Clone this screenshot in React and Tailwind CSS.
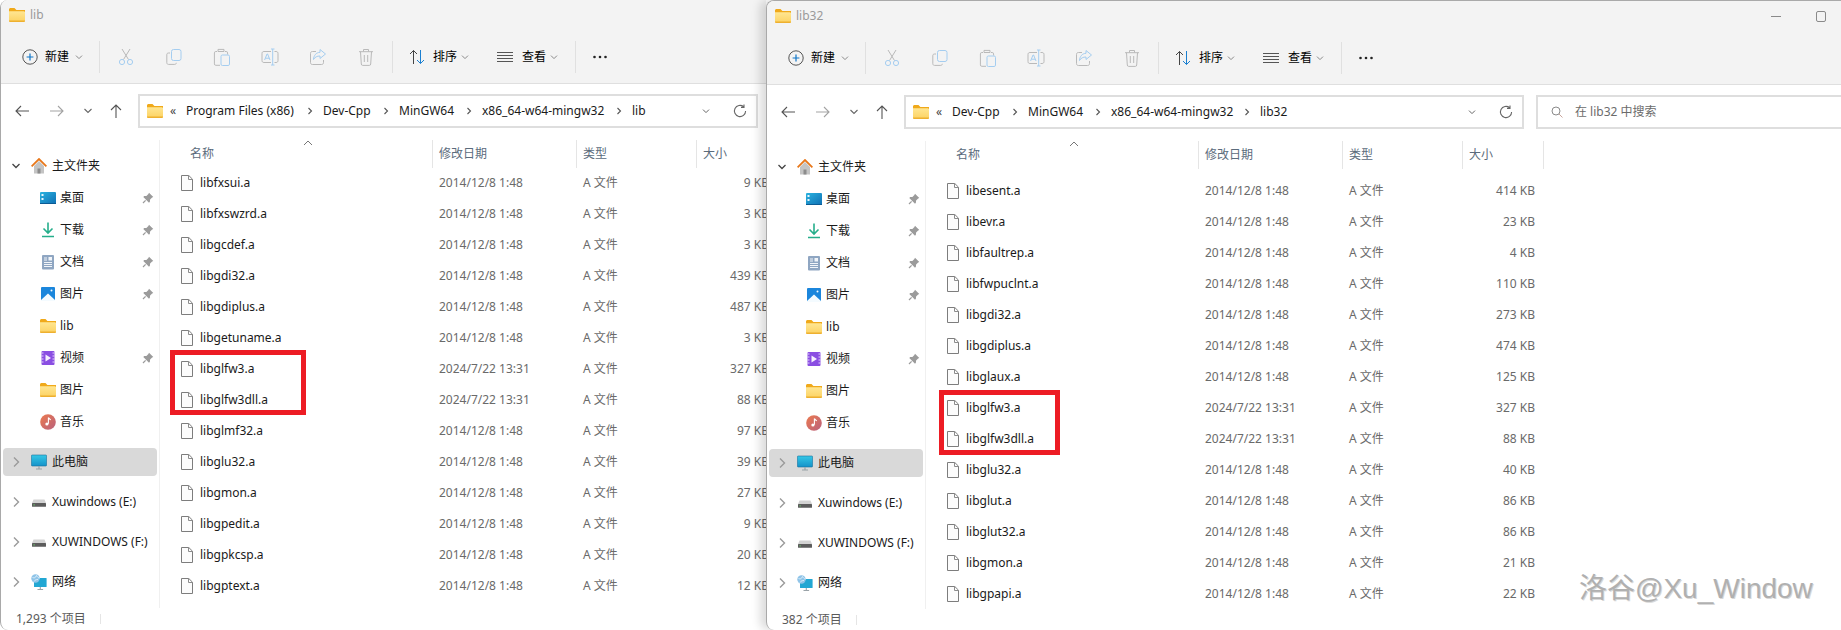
import React from "react";

const Folder = ({ className = "w-4 h-[14px]" }) => (
  <svg viewBox="0 0 16 14" className={className}>
    <defs>
      <linearGradient id="fg" x1="0" y1="0" x2="0" y2="1">
        <stop offset="0" stopColor="#ffe692" />
        <stop offset="1" stopColor="#fcd262" />
      </linearGradient>
    </defs>
    <path d="M0 1.5C0 .7.7 0 1.5 0h4L7.4 2H16v2H0z" fill="#f0a91a" />
    <path d="M0 3.2h14.6c.8 0 1.4.6 1.4 1.4v8c0 .8-.6 1.4-1.4 1.4H1.4C.6 14 0 13.4 0 12.6z" fill="url(#fg)" />
    <path d="M0 12.5h16v.2c0 .7-.6 1.3-1.3 1.3H1.3C.6 14 0 13.4 0 12.7z" fill="#eeb02f" />
  </svg>
);

const FileIcon = () => (
  <svg viewBox="0 0 12 16" className="w-3 h-4 shrink-0">
    <path d="M.5.5h7.3l3.7 3.7v11.3H.5z" fill="#fcfcfc" stroke="#7d7d7d" />
    <path d="M7.5.5v4h4" fill="none" stroke="#8c8c8c" />
  </svg>
);

const Chev = ({ c = "#8a8a8a" }) => (
  <svg viewBox="0 0 8 8" className="w-2 h-2 shrink-0">
    <path d="M1 2.6l3 3 3-3" fill="none" stroke={c} strokeWidth="1" />
  </svg>
);

const Cmd = ({ children }) => (
  <div className="w-[48px] h-[18px] flex items-center justify-center">
    <svg viewBox="0 0 18 18" className="w-[18px] h-[18px]" fill="none" strokeWidth="1">
      {children}
    </svg>
  </div>
);

const G = "#b9b9b9";
const B = "#a4cdf0";

const Divider = ({ className }) => <div className={className} />;

const CommandBar = () => (
  <div className="h-[53px] flex items-center pl-[21px] border-b border-[#dfdfdf] box-content">
    <svg viewBox="0 0 16 16" className="w-4 h-4 shrink-0">
      <circle cx="8" cy="8" r="7.2" fill="none" stroke="#555" strokeWidth="1" />
      <path d="M8 4.6v6.8M4.6 8h6.8" stroke="#0f76c8" strokeWidth="1.2" />
    </svg>
    <span className="ml-[7px] w-6 whitespace-nowrap">新建</span>
    <div className="ml-[6px]"><Chev /></div>
    <Divider className="ml-4 w-px h-8 bg-[#e0e0e0]" />
    <div className="ml-[2px] flex">
      <Cmd>
        <path d="M5 1l6.5 10.5M13 1L6.5 11.5" stroke={G} />
        <circle cx="5" cy="14" r="2.6" stroke={B} />
        <circle cx="13" cy="14" r="2.6" stroke={B} />
      </Cmd>
      <Cmd>
        <path d="M5 5H3.5C2.4 5 1.8 5.6 1.8 6.7v8c0 1 .7 1.7 1.7 1.7h6.2c1 0 1.6-.6 1.6-1.6" stroke={G} />
        <rect x="6.5" y="1.5" width="9.5" height="11" rx="2" stroke={B} />
      </Cmd>
      <Cmd>
        <path d="M4 3.5H2.8C1.9 3.5 1.4 4 1.4 4.9v11c0 .9.5 1.4 1.4 1.4H7M12 3.5h1.2c.9 0 1.4.5 1.4 1.4v1.6M5 3.5V1.4h6v2.1z" stroke={G} />
        <rect x="8" y="7" width="8.5" height="10.5" rx="1.4" stroke={B} />
      </Cmd>
      <Cmd>
        <path d="M10 3.5H3c-1.3 0-2 .7-2 2v7c0 1.3.7 2 2 2h7M13.5 3.5H15c1.3 0 2 .7 2 2v7c0 1.3-.7 2-2 2h-1.5" stroke={G} />
        <path d="M10 1h3.5M10 17h3.5M11.7 1v16M3.6 12L6 6h.6L9 12M4.5 10.2h3.6" stroke={B} />
      </Cmd>
      <Cmd>
        <path d="M7 3.5H3.5c-1.3 0-2 .7-2 2v9c0 1.3.7 2 2 2h9c1.3 0 2-.7 2-2V12" stroke={G} />
        <path d="M11 1.5l5.5 4.5-5.5 4.5V8c-3 0-5 1-6.5 3.5C4.8 7.5 7 4.5 11 4.3z" stroke={B} />
      </Cmd>
      <Cmd>
        <path d="M2 3.7h14M6.5 3.5V1.5h5v2M3.5 3.7l.8 12.3c0 .9.5 1.4 1.4 1.4h6.6c.9 0 1.4-.5 1.4-1.4l.8-12.3M7.3 7v7M10.7 7v7" stroke={G} />
      </Cmd>
    </div>
    <Divider className="ml-[2px] w-px h-8 bg-[#e0e0e0]" />
    <svg viewBox="0 0 16 16" className="ml-4 w-4 h-4 shrink-0" fill="none">
      <path d="M4.5 15V1.5M1 5l3.5-3.5L8 5" stroke="#444" strokeWidth="1" />
      <path d="M11.5 1v13.5M8 11l3.5 3.5L15 11" stroke="#1a7fd0" strokeWidth="1" />
    </svg>
    <span className="ml-2 w-6 whitespace-nowrap">排序</span>
    <div className="ml-1"><Chev /></div>
    <svg viewBox="0 0 16 12" className="ml-[28px] w-4 h-3 shrink-0">
      <path d="M0 1.5h16M0 4.5h16M0 7.5h16M0 10.5h16" stroke="#555" strokeWidth="1" />
    </svg>
    <span className="ml-[9px] w-6 whitespace-nowrap">查看</span>
    <div className="ml-1"><Chev /></div>
    <Divider className="ml-[17px] w-px h-8 bg-[#e0e0e0]" />
    <svg viewBox="0 0 16 4" className="ml-4 w-4 h-1 shrink-0">
      <circle cx="2.5" cy="2" r="1.3" fill="#222" />
      <circle cx="8" cy="2" r="1.3" fill="#222" />
      <circle cx="13.5" cy="2" r="1.3" fill="#222" />
    </svg>
  </div>
);

const Arrow = ({ d, c }) => (
  <svg viewBox="0 0 16 16" className="w-4 h-4 shrink-0" fill="none">
    <path d={d} stroke={c} strokeWidth="1.1" />
  </svg>
);

const Sep = ({ className = "w-[26px]" }) => (
  <span className={`${className} flex justify-center shrink-0`}>
    <svg viewBox="0 0 6 8" className="w-[6px] h-2">
      <path d="M1.5 1l3 3-3 3" fill="none" stroke="#555" strokeWidth="1.1" />
    </svg>
  </span>
);

const AddressBar = ({ segs, search }) => (
  <div className="mt-[10px] h-[34px] flex items-center pl-[13px]">
    <Arrow d="M15 8H2M7 3L2 8l5 5" c="#555" />
    <div className="ml-[19px]"><Arrow d="M1 8h13M9 3l5 5-5 5" c="#a3a3a3" /></div>
    <div className="ml-[15px]"><Arrow d="M4.5 6l3.5 3.5L11.5 6" c="#666" /></div>
    <div className="ml-3"><Arrow d="M8 15V2M3 7l5-5 5 5" c="#555" /></div>
    <div className="ml-[14px] w-[620px] h-[34px] shrink-0 border-2 border-[#dedede] bg-white flex items-center pl-[7px] text-[#1a1a1a]">
      <Folder />
      <span className="w-[23px] shrink-0 pl-[7px] text-[#444] leading-none">«</span>
      {segs.map(([label, w], i) => (
        <React.Fragment key={label}>
          {i > 0 && <Sep />}
          <span style={{ width: w }} className="whitespace-nowrap shrink-0">{label}</span>
        </React.Fragment>
      ))}
      <div className="ml-auto flex items-center pr-[9px] gap-[23px]">
        <Chev c="#666" />
        <svg viewBox="0 0 14 14" className="w-[14px] h-[14px]" fill="none">
          <path d="M12.6 7A5.6 5.6 0 1 1 10.6 2.7M11 .4v3h-3" stroke="#666" strokeWidth="1.1" />
        </svg>
      </div>
    </div>
    {search && (
      <div className="ml-3 flex-1 h-[34px] border-2 border-[#dedede] border-r-0 flex items-center pl-[13px] text-[#6b6b6b]">
        <svg viewBox="0 0 12 12" className="w-3 h-3 shrink-0" fill="none">
          <circle cx="5" cy="5" r="4" stroke="#8a8a8a" />
          <path d="M8 8l3.5 3.5" stroke="#c9a49a" />
        </svg>
        <span className="ml-[12px] whitespace-nowrap">{search}</span>
      </div>
    )}
  </div>
);

const Ic = ({ children, w = "w-4" }) => (
  <svg viewBox="0 0 16 16" className={`${w} h-4 shrink-0`}>{children}</svg>
);

const Home = () => (
  <Ic>
    <path d="M3 8l5-5 5 5v7.5H3z" fill="#c4c4c4" />
    <path d="M6.5 15.5v-5h3v5z" fill="#8c8c8c" />
    <path d="M.6 8.3L8 1l7.4 7.3" fill="none" stroke="#e8771a" strokeWidth="1.8" />
  </Ic>
);
const Desktop = () => (
  <Ic>
    <defs>
      <linearGradient id="dg" x1="0" y1="0" x2="1" y2="1">
        <stop offset="0" stopColor="#2ab3e0" />
        <stop offset="1" stopColor="#0f6fb3" />
      </linearGradient>
    </defs>
    <rect x="0" y="2" width="16" height="12" rx="1" fill="url(#dg)" />
    <rect x="1.5" y="4" width="2" height="2" fill="#e9f6fc" />
    <rect x="1.5" y="8" width="2" height="2" fill="#e9f6fc" />
    <rect x="0" y="13" width="16" height="1" fill="#0b5b94" />
  </Ic>
);
const Download = () => (
  <Ic>
    <path d="M8 .5V11M3.5 6.5L8 11l4.5-4.5" fill="none" stroke="#25ae8b" strokeWidth="1.6" />
    <path d="M2 14.5h12" stroke="#25ae8b" strokeWidth="1.5" />
  </Ic>
);
const Docs = () => (
  <Ic>
    <rect x="2" y="1" width="12" height="14.5" rx="1" fill="#8fa6c2" />
    <rect x="8.5" y="3" width="3.5" height="3.5" fill="#f2f5f9" />
    <path d="M4 4h3M4 6h3M4 8.5h8M4 10.5h8M4 12.5h8" stroke="#f2f5f9" />
  </Ic>
);
const Pics = () => (
  <Ic>
    <rect x="1" y="1" width="14" height="14" rx="1" fill="#1b86dc" />
    <path d="M1 14l7-6.5L15 14v1H1z" fill="#f4fbff" />
    <circle cx="11.5" cy="4.5" r="1" fill="#f4fbff" />
  </Ic>
);
const Video = () => (
  <Ic>
    <rect x="1.5" y="1" width="13" height="14" rx="1" fill="#8a4ee2" />
    <path d="M1.5 3h2M1.5 6h2M1.5 9h2M1.5 12h2M12.5 3h2M12.5 6h2M12.5 9h2M12.5 12h2" stroke="#e1d1fb" />
    <path d="M5.5 4.5L11 8l-5.5 3.5z" fill="#f5effe" />
  </Ic>
);
const Music = () => (
  <Ic>
    <defs>
      <linearGradient id="mg" x1="0" y1="0" x2="1" y2="1">
        <stop offset="0" stopColor="#ec7a4e" />
        <stop offset="1" stopColor="#b9617e" />
      </linearGradient>
    </defs>
    <circle cx="8" cy="8" r="7.8" fill="url(#mg)" />
    <path d="M8.4 3.5v6.2M8.4 3.5c.4 1.3 1.6 1.7 2.4 2.2" fill="none" stroke="#fff" strokeWidth="1.1" />
    <circle cx="6.9" cy="10" r="1.6" fill="#fff" />
  </Ic>
);
const PC = () => (
  <Ic>
    <defs>
      <linearGradient id="pg" x1="0" y1="0" x2="0" y2="1">
        <stop offset="0" stopColor="#34c7e6" />
        <stop offset="1" stopColor="#1592c9" />
      </linearGradient>
    </defs>
    <rect x=".4" y="1" width="15.2" height="11" rx=".8" fill="url(#pg)" stroke="#1a6f9a" strokeWidth=".6" />
    <path d="M8 12v2.5M5 15h6" stroke="#9aa3a8" strokeWidth="1.2" />
  </Ic>
);
const Drive = () => (
  <Ic>
    <path d="M2.5 5.5h11L15 9H1z" fill="#d3d3d3" />
    <rect x="1" y="9" width="14" height="3.8" rx=".5" fill="#5c5c5c" />
    <rect x="2.5" y="10.4" width="1.2" height="1" fill="#6fe06f" />
  </Ic>
);
const Net = () => (
  <Ic>
    <rect x="3" y="4" width="12.6" height="9" rx=".6" fill="#22a7d3" />
    <path d="M9.3 13v2M6.5 15.5h5.6" stroke="#9aa3a8" strokeWidth="1.1" />
    <circle cx="4.5" cy="4.5" r="4.2" fill="#8fc4e8" />
    <path d="M1.5 3.5c2 .8 3 .3 4-2 1 1.5 2 2.5 3 2.8M3 7.5c1-1.5 2-2 4-2" fill="none" stroke="#e9f5fc" strokeWidth=".8" />
  </Ic>
);

const Pin = () => (
  <svg viewBox="0 0 12 12" className="w-3 h-3 shrink-0 ml-auto mr-[4px]">
    <path d="M7 .7l4.3 4.3-1.2.6-2 2-.2 2.2L7 10.7 1.3 5l.9-.9 2.2-.2 2-2z" fill="#9b9b9b" />
    <path d="M3.6 8.4L1 11" stroke="#9b9b9b" strokeWidth="1.2" />
  </svg>
);

const pinned = [
  ["桌面", <Desktop />, true],
  ["下载", <Download />, true],
  ["文档", <Docs />, true],
  ["图片", <Pics />, true],
  ["lib", <Folder />, false],
  ["视频", <Video />, true],
  ["图片", <Folder />, false],
  ["音乐", <Music />, false],
];

const drives = [
  ["Xuwindows (E:)", <Drive />],
  ["XUWINDOWS (F:)", <Drive />],
  ["网络", <Net />],
];

const Right = () => (
  <svg viewBox="0 0 8 12" className="w-2 h-3 shrink-0">
    <path d="M2 1.5L6.5 6 2 10.5" fill="none" stroke="#9a9a9a" strokeWidth="1.4" />
  </svg>
);

const Sidebar = ({ pins }) => (
  <div className="w-[159px] shrink-0 border-r border-[#f0f0f0] pt-[10px] text-[#1a1a1a] overflow-hidden">
    <div className="h-8 flex items-center pl-[11px]">
      <svg viewBox="0 0 8 8" className="w-2 h-2 shrink-0">
        <path d="M.5 2l3.5 3.5L7.5 2" fill="none" stroke="#444" strokeWidth="1.3" />
      </svg>
      <div className="ml-[11px]"><Home /></div>
      <span className="ml-[5px] whitespace-nowrap">主文件夹</span>
    </div>
    {pinned.map(([label, icon, pin], i) => (
      <div key={i} className="h-8 flex items-center pl-[39px] pr-[1px]">
        <span className="w-4 flex justify-center">{icon}</span>
        <span className="ml-1 whitespace-nowrap">{label}</span>
        {pin && pins.includes(i) && <Pin />}
      </div>
    ))}
    <div className="mt-[10px] ml-[2px] w-[154px] h-7 rounded bg-[#d9d9d9] flex items-center pl-[9px]">
      <Right />
      <div className="ml-[11px]"><PC /></div>
      <span className="ml-[5px] whitespace-nowrap">此电脑</span>
    </div>
    {drives.map(([label, icon]) => (
      <div key={label} className="mt-3 h-7 flex items-center pl-[11px]">
        <Right />
        <div className="ml-[11px]">{icon}</div>
        <span className="ml-[5px] whitespace-nowrap">{label}</span>
      </div>
    ))}
  </div>
);

const Header = () => (
  <div className="h-7 flex text-[#5b6b7c] shrink-0">
    <div className="relative w-[272px] shrink-0 pl-[30px] flex items-center">
      名称
      <svg viewBox="0 0 10 6" className="absolute left-[143px] top-0 w-[10px] h-[6px]">
        <path d="M1 5l4-4 4 4" fill="none" stroke="#777" strokeWidth="1" />
      </svg>
    </div>
    <div className="w-[144px] shrink-0 border-l border-[#e5e5e5] pl-[6px] flex items-center">修改日期</div>
    <div className="w-[120px] shrink-0 border-l border-[#e5e5e5] pl-[6px] flex items-center">类型</div>
    <div className="w-[82px] shrink-0 border-x border-[#e5e5e5] pl-[6px] flex items-center">大小</div>
  </div>
);

const Row = ({ name, date, size }) => (
  <div className="h-[31px] flex items-center text-[#6a6a6a]">
    <div className="w-[272px] shrink-0 pl-[21px] flex items-center text-[#1a1a1a]">
      <FileIcon />
      <span className="ml-[7px] whitespace-nowrap">{name}</span>
    </div>
    <div className="w-[144px] shrink-0 pl-[7px] whitespace-nowrap">{date}</div>
    <div className="w-[120px] shrink-0 pl-[7px] whitespace-nowrap">A 文件</div>
    <div className="w-[73px] shrink-0 text-right whitespace-nowrap">{size}</div>
  </div>
);

const D1 = "2014/12/8 1:48";
const D2 = "2024/7/22 13:31";

const leftRows = [
  ["libfxsui.a", D1, "9 KB"],
  ["libfxswzrd.a", D1, "3 KB"],
  ["libgcdef.a", D1, "3 KB"],
  ["libgdi32.a", D1, "439 KB"],
  ["libgdiplus.a", D1, "487 KB"],
  ["libgetuname.a", D1, "3 KB"],
  ["libglfw3.a", D2, "327 KB"],
  ["libglfw3dll.a", D2, "88 KB"],
  ["libglmf32.a", D1, "97 KB"],
  ["libglu32.a", D1, "39 KB"],
  ["libgmon.a", D1, "27 KB"],
  ["libgpedit.a", D1, "9 KB"],
  ["libgpkcsp.a", D1, "20 KB"],
  ["libgptext.a", D1, "12 KB"],
];

const rightRows = [
  ["libesent.a", D1, "414 KB"],
  ["libevr.a", D1, "23 KB"],
  ["libfaultrep.a", D1, "4 KB"],
  ["libfwpuclnt.a", D1, "110 KB"],
  ["libgdi32.a", D1, "273 KB"],
  ["libgdiplus.a", D1, "474 KB"],
  ["libglaux.a", D1, "125 KB"],
  ["libglfw3.a", D2, "327 KB"],
  ["libglfw3dll.a", D2, "88 KB"],
  ["libglu32.a", D1, "40 KB"],
  ["libglut.a", D1, "86 KB"],
  ["libglut32.a", D1, "86 KB"],
  ["libgmon.a", D1, "21 KB"],
  ["libgpapi.a", D1, "22 KB"],
];

const Win = ({ className, title, segs, search, rows, rowsClass, pins, count, controls, mark }) => (
  <div className={className}>
    <div className="bg-[#f3f3f3] shrink-0">
      <div className="h-[30px] flex items-center pl-[8px] pr-[15px]">
        <Folder />
        <span className="ml-[5px] text-[#9a9a9a]">{title}</span>
        {controls && (
          <div className="ml-auto flex items-center gap-[35px]">
            <div className="w-[10px] h-px bg-[#8a8a8a]" />
            <div className="w-[10px] h-[11px] border border-[#8a8a8a] rounded-[2px]" />
          </div>
        )}
      </div>
      <CommandBar />
    </div>
    <AddressBar segs={segs} search={search} />
    <div className="mt-3 flex h-[468px] shrink-0">
      <Sidebar pins={pins} />
      <div className="relative flex-1 overflow-hidden">
        <Header />
        <div className={rowsClass}>
          {rows.map((r) => <Row key={r[0]} name={r[0]} date={r[1]} size={r[2]} />)}
        </div>
        {mark}
      </div>
    </div>
    <div className="h-[22px] flex items-center pl-[15px] text-[#5a5a5a]">
      <span className="whitespace-nowrap">{count}</span>
      <div className="ml-[14px] w-px h-[10px] bg-[#e5e5e5]" />
    </div>
  </div>
);

export default function App() {
  return (
    <div className="relative w-[1841px] h-[630px] overflow-hidden flex bg-white text-[12px] font-['Noto_Sans','Noto_Sans_CJK_SC',sans-serif]">
      <Win
        className="w-[766px] shrink-0 h-[630px] flex flex-col overflow-hidden rounded-l-lg border-l border-[#a9a9a9] bg-white"
        title="lib"
        segs={[["Program Files (x86)", 111], ["Dev-Cpp", 50], ["MinGW64", 57], ["x86_64-w64-mingw32", 124], ["lib", 30]]}
        rows={leftRows}
        rowsClass="-mt-px"
        pins={[0, 1, 2, 3, 5]}
        count="1,293 个项目"
        mark={<div className="absolute left-[10px] top-[210px] w-[136px] h-[65px] border-[5px] border-[#ed1c24]" />}
      />
      <Win
        className="relative z-10 flex-1 h-[630px] flex flex-col overflow-hidden rounded-l-lg border-l border-t border-[#a9a9a9] bg-white shadow-[-6px_0_10px_rgba(0,0,0,0.14)]"
        title="lib32"
        controls
        segs={[["Dev-Cpp", 50], ["MinGW64", 57], ["x86_64-w64-mingw32", 123], ["lib32", 30]]}
        search="在 lib32 中搜索"
        rows={rightRows}
        rowsClass="mt-[6px]"
        pins={[0, 1, 2, 3, 5]}
        count="382 个项目"
        mark={<div className="absolute left-[13px] top-[249px] w-[121px] h-[65px] border-[5px] border-[#ed1c24]" />}
      />
      <div className="absolute z-20 left-[1579px] top-[573px] text-[28px] leading-[32px] whitespace-nowrap text-[#b0b0b0] font-['Liberation_Sans','Noto_Sans_CJK_SC',sans-serif] [text-shadow:1px_1px_0_#d8d8d8]">
        洛谷@Xu_Window
      </div>
    </div>
  );
}
